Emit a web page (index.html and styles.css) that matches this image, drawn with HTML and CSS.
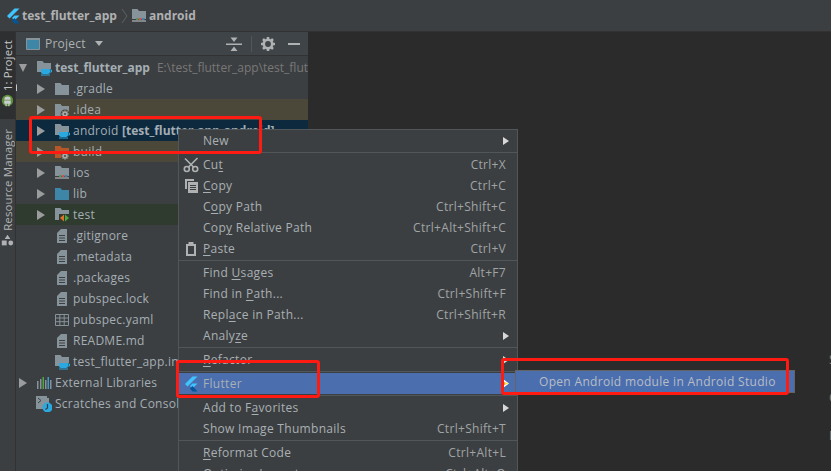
FILE: index.html
```html
<!DOCTYPE html>
<html lang="en">
<head>
<meta charset="utf-8">
<title>test_flutter_app</title>
<link rel="stylesheet" href="styles.css">
</head>
<body>
<svg class="defs" width="0" height="0">
  <symbol id="flutter" viewBox="0 0 16 16">
    <polygon fill="#40c4ff" points="9.5,0.5 14.500,0.5 4.5,10.500 2,8"/>
    <polygon fill="#40c4ff" points="9.5,7.5 14.500,7.500 9.500,12.500 7,10"/>
    <polygon fill="#03569b" points="7,12.500 9.500,10 14.500,15.500 9.500,15.500"/>
  </symbol>
  <symbol id="folder" viewBox="0 0 16 16">
    <path fill="#87939a" d="M1 2h5.500l1.500 2h7v10H1z"/>
  </symbol>
  <symbol id="folder-blue" viewBox="0 0 16 16">
    <path fill="#3d86a8" d="M1 2h5.500l1.500 2h7v10H1z"/>
  </symbol>
  <symbol id="folder-orange" viewBox="0 0 16 16">
    <path fill="#b5562b" d="M1 2h5.500l1.500 2h7v10H1z"/>
    <circle cx="11" cy="12" r="4" fill="#4b483a"/>
    <path stroke="#a9adaf" stroke-width="1.400" d="M11 8.500v7M7.500 12h7M8.500 9.500l5 5M13.500 9.500l-5 5"/>
    <circle cx="11" cy="12" r="1" fill="#4b483a"/>
  </symbol>
  <symbol id="folder-gear" viewBox="0 0 16 16">
    <path fill="#87939a" d="M1 2h5.500l1.500 2h7v10H1z"/>
    <circle cx="11" cy="12" r="4.500" fill="#4b483a"/>
    <path stroke="#a9adaf" stroke-width="1.400" d="M11 8.500v7M7.500 12h7M8.500 9.500l5 5M13.500 9.500l-5 5"/>
    <circle cx="11" cy="12" r="1" fill="#4b483a"/>
  </symbol>
  <symbol id="folder-cup" viewBox="0 0 16 16">
    <path fill="#87939a" d="M1 1h5.500l1.500 2h7v6H5v3H1z"/>
    <path fill="#29a9e0" d="M5 9h9v3a2 2 0 0 1-2 2H7a2 2 0 0 1-2-2z"/>
    <path fill="none" stroke="#29a9e0" d="M14 10h1.500v2H14"/>
    <path fill="#29a9e0" d="M5 14.500h9v1H5z"/>
  </symbol>
  <symbol id="folder-android" viewBox="0 0 16 16">
    <path fill="#87939a" d="M1 1h5.500l1.500 2h7v8H1z"/>
    <path fill="#c8ced1" d="M1 12.500h14v1H1z"/>
    <path fill="#5f8f5a" d="M5 10h2.500v2H5z"/>
    <path fill="#c75450" d="M8 10h2.500v2H8z"/>
    <path fill="#3d86a8" d="M11 10h2.500v2H11z"/>
  </symbol>
  <symbol id="folder-test" viewBox="0 0 16 16">
    <path fill="#87939a" d="M1 1h5.500l1.500 2h7v10H1z"/>
    <path fill="#2e3b2e" d="M5 7h11v9H5z"/>
    <path fill="#e0702a" d="M10 7.500v7L6 11z"/>
    <path fill="#4fa83d" d="M11 7.500v7l4-3.500z"/>
  </symbol>
  <symbol id="file" viewBox="0 0 16 16">
    <path fill="#87939a" d="M7 1h6v14H3V5z"/>
    <path stroke="#3c3f41" d="M5 7.500h6M5 10h6M5 12.500h6"/>
  </symbol>
  <symbol id="table" viewBox="0 0 16 16">
    <path fill="none" stroke="#87939a" d="M1.500 2.500h13v11h-13zM1.500 6h13M1.500 9.700h13M5.800 2.500v11M10.200 2.500v11"/>
  </symbol>
  <symbol id="libs" viewBox="0 0 16 16">
    <path fill="#87939a" d="M1 6h1.500v8H1z"/>
    <path fill="#87939a" d="M4 4h1.500v10H4z"/>
    <path fill="#4fa83d" d="M6.500 2H8v12H6.500z"/>
    <path fill="#87939a" d="M9 5h1.500v9H9z"/>
    <path fill="#3d9bd0" d="M11.500 2H13v12h-1.500z"/>
    <path fill="#87939a" d="M14 5h1.500v9H14z"/>
  </symbol>
  <symbol id="scratch" viewBox="0 0 16 16">
    <path fill="#87939a" d="M0 0h11v2h2v7H8v4H0z"/>
    <path fill="none" stroke="#3c3f41" d="M2 2l3 2.500L2 7"/>
    <circle cx="11.500" cy="11.500" r="5" fill="#29a9e0"/>
    <path fill="none" stroke="#3c3f41" stroke-width="1.200" d="M11.500 8v4l-2 1.500"/>
  </symbol>
  <symbol id="scissors" viewBox="0 0 16 16">
    <path fill="none" stroke="#afb1b3" stroke-width="1.600" d="M14.500 1L5.500 10M2 1.500l9 9"/>
    <circle cx="3.800" cy="12" r="2.500" fill="none" stroke="#afb1b3" stroke-width="1.600"/>
    <circle cx="12.200" cy="12" r="2.500" fill="none" stroke="#afb1b3" stroke-width="1.600"/>
  </symbol>
  <symbol id="copy" viewBox="0 0 16 16">
    <path fill="#afb1b3" d="M2 1h9v2H4v8H2z"/>
    <path fill="#afb1b3" d="M5 4h10v11H5z"/>
    <path stroke="#3c3f41" d="M7 7.500h6M7 9.500h6M7 11.500h6"/>
  </symbol>
  <symbol id="paste" viewBox="0 0 16 16">
    <path fill="none" stroke="#afb1b3" stroke-width="2" d="M4 4h8v10H4z"/>
    <path fill="#afb1b3" d="M5.500 1h5v3h-5z"/>
  </symbol>
  <symbol id="gear" viewBox="0 0 16 16">
    <circle cx="8" cy="8" r="4.200" fill="none" stroke="#afb1b3" stroke-width="2.600"/>
    <path stroke="#afb1b3" stroke-width="2.600" d="M8 1v2.500M8 12.500V15M1 8h2.500M12.500 8H15M3 3l1.800 1.800M11.200 11.200L13 13M13 3l-1.800 1.800M4.800 11.200L3 13"/>
  </symbol>
  <symbol id="collapse" viewBox="0 0 16 16">
    <path fill="#afb1b3" d="M0 7.500h16v1.500H0zM8 6L4.500 1.500h7zM8 10.500L4.500 15h7z"/>
  </symbol>
  <symbol id="panel" viewBox="0 0 16 16">
    <path fill="#3d86a8" stroke="#87939a" d="M1.500 2.500h13v11h-13z"/>
    <path fill="#87939a" d="M1 2h14v2H1z"/>
  </symbol>
  <symbol id="android" viewBox="0 0 16 16">
    <circle cx="8" cy="8" r="7" fill="#5f8f3a"/>
    <path fill="#c8ced1" d="M4 7a4 4 0 0 1 8 0z"/>
    <path fill="#c8ced1" d="M4 8h8v4h-1.500v3H9v-3H7v3H5.500v-3H4z"/>
  </symbol>
  <symbol id="shapes" viewBox="0 0 16 16">
    <path fill="#afb1b3" d="M8 1l3.500 5h-7z"/>
    <path fill="#afb1b3" d="M1 8h6v6H1z"/>
    <circle cx="12" cy="11" r="3" fill="#afb1b3"/>
  </symbol>
</svg>

<header class="nav">
  <svg class="nav-logo"><use href="#flutter"/></svg>
  <b class="crumb">test_flutter_app</b>
  <svg class="chev" viewBox="0 0 8 16"><path fill="none" stroke="#5e6060" d="M1 1l5 7-5 7"/></svg>
  <svg class="ico"><use href="#folder-android"/></svg>
  <b class="crumb">android</b>
</header>

<div class="main">
  <aside class="stripe">
    <div class="tab active">
      <span class="vtext"><u>1</u>: Project</span>
      <svg class="stripe-ico"><use href="#android"/></svg>
    </div>
    <div class="tab">
      <span class="vtext">Resource Manager</span>
      <svg class="stripe-ico"><use href="#shapes"/></svg>
    </div>
  </aside>

  <section class="panel">
    <div class="panel-head">
      <svg class="ico"><use href="#panel"/></svg>
      <span class="panel-title">Project</span>
      <span class="caret"></span>
      <span class="spacer"></span>
      <svg class="ico head-btn"><use href="#collapse"/></svg>
      <span class="head-sep"></span>
      <svg class="ico head-btn"><use href="#gear"/></svg>
      <span class="minus"></span>
    </div>
    <div class="tree">
      <div class="row root"><span class="arrow down"></span><svg class="ico"><use href="#folder-cup"/></svg><b>test_flutter_app</b><span class="path">E:\test_flutter_app\test_flutter_app</span></div>
      <div class="row d1"><span class="arrow"></span><svg class="ico"><use href="#folder"/></svg><span>.gradle</span></div>
      <div class="row d1 olive"><span class="arrow"></span><svg class="ico"><use href="#folder-gear"/></svg><span>.idea</span></div>
      <div class="row d1 selected"><span class="arrow"></span><svg class="ico"><use href="#folder-cup"/></svg><span>android <b>[test_flutter-app-android]</b></span></div>
      <div class="row d1 olive"><span class="arrow"></span><svg class="ico"><use href="#folder-orange"/></svg><span>build</span></div>
      <div class="row d1"><span class="arrow"></span><svg class="ico"><use href="#folder-android"/></svg><span>ios</span></div>
      <div class="row d1"><span class="arrow"></span><svg class="ico"><use href="#folder-blue"/></svg><span>lib</span></div>
      <div class="row d1 green"><span class="arrow"></span><svg class="ico"><use href="#folder-test"/></svg><span>test</span></div>
      <div class="row d1"><span class="arrow none"></span><svg class="ico"><use href="#file"/></svg><span>.gitignore</span></div>
      <div class="row d1"><span class="arrow none"></span><svg class="ico"><use href="#file"/></svg><span>.metadata</span></div>
      <div class="row d1"><span class="arrow none"></span><svg class="ico"><use href="#file"/></svg><span>.packages</span></div>
      <div class="row d1"><span class="arrow none"></span><svg class="ico"><use href="#file"/></svg><span>pubspec.lock</span></div>
      <div class="row d1"><span class="arrow none"></span><svg class="ico"><use href="#table"/></svg><span>pubspec.yaml</span></div>
      <div class="row d1"><span class="arrow none"></span><svg class="ico"><use href="#file"/></svg><span>README.md</span></div>
      <div class="row d1"><span class="arrow none"></span><svg class="ico"><use href="#folder-cup"/></svg><span>test_flutter_app.iml</span></div>
      <div class="row root"><span class="arrow"></span><svg class="ico"><use href="#libs"/></svg><span>External Libraries</span></div>
      <div class="row root"><span class="arrow none"></span><svg class="ico"><use href="#scratch"/></svg><span>Scratches and Consoles</span></div>
    </div>
  </section>

  <main class="editor">
    <div class="hints"><span>S</span><span>G</span><span>D</span></div>
  </main>
</div>

<nav class="menu">
  <div class="item"><span class="slot"></span><span class="label">New</span><span class="sub"></span></div>
  <hr>
  <div class="item"><svg class="slot"><use href="#scissors"/></svg><span class="label">Cu<u>t</u></span><span class="key">Ctrl+X</span></div>
  <div class="item"><svg class="slot"><use href="#copy"/></svg><span class="label"><u>C</u>opy</span><span class="key">Ctrl+C</span></div>
  <div class="item"><span class="slot"></span><span class="label">C<u>o</u>py Path</span><span class="key">Ctrl+Shift+C</span></div>
  <div class="item"><span class="slot"></span><span class="label">Cop<u>y</u> Relative Path</span><span class="key">Ctrl+Alt+Shift+C</span></div>
  <div class="item"><svg class="slot"><use href="#paste"/></svg><span class="label"><u>P</u>aste</span><span class="key">Ctrl+V</span></div>
  <hr>
  <div class="item"><span class="slot"></span><span class="label">Find <u>U</u>sages</span><span class="key">Alt+F7</span></div>
  <div class="item"><span class="slot"></span><span class="label">Find in <u>P</u>ath...</span><span class="key">Ctrl+Shift+F</span></div>
  <div class="item"><span class="slot"></span><span class="label">Repl<u>a</u>ce in Path...</span><span class="key">Ctrl+Shift+R</span></div>
  <div class="item"><span class="slot"></span><span class="label">Analy<u>z</u>e</span><span class="sub"></span></div>
  <hr>
  <div class="item"><span class="slot"></span><span class="label"><u>R</u>efactor</span><span class="sub"></span></div>
  <hr>
  <div class="item active"><svg class="slot"><use href="#flutter"/></svg><span class="label">Flutter</span><svg class="sub-on" viewBox="0 0 6 9"><path fill="#fff" d="M0 0l6 4.500L0 9z"/><path fill="#ffe800" d="M2 3l3 1.500L2 6z"/><path fill="#d02030" d="M0 3h1.500v3H0z"/></svg></div>
  <hr>
  <div class="item"><span class="slot"></span><span class="label">Add to F<u>a</u>vorites</span><span class="sub"></span></div>
  <div class="item"><span class="slot"></span><span class="label">Show Image Thumbnails</span><span class="key">Ctrl+Shift+T</span></div>
  <hr>
  <div class="item"><span class="slot"></span><span class="label"><u>R</u>eformat Code</span><span class="key">Ctrl+Alt+L</span></div>
  <div class="item"><span class="slot"></span><span class="label">Optimi<u>z</u>e Imports</span><span class="key">Ctrl+Alt+O</span></div>
</nav>

<div class="submenu">Open Android module in Android Studio</div>

<div class="mark mark-android"></div>
<div class="mark mark-flutter"></div>
<div class="mark mark-open"></div>
</body>
</html>
```
FILE: styles.css
```css
* { box-sizing: border-box; }
html, body { margin: 0; height: 100%; }
body {
  position: relative;
  display: flex;
  flex-direction: column;
  width: 831px;
  height: 471px;
  overflow: hidden;
  background: #2b2b2b;
  color: #afb1b3;
  font-family: "Open Sans", "Noto Sans", sans-serif;
  font-size: 12px;
}
.defs { position: absolute; }
.ico { width: 16px; height: 16px; flex: none; }

.nav {
  display: flex;
  align-items: center;
  height: 32px;
  flex: none;
  padding: 0 0 0 5px;
  background: #3c3f41;
  border-bottom: 1px solid #323232;
}
.nav-logo { width: 16px; height: 16px; margin-right: 1px; }
.crumb { font-weight: 700; color: #afb1b3; }
.chev { width: 8px; height: 16px; margin: 0 2px 0 4px; }
.nav .ico { margin-right: 2px; }

.main { display: flex; flex: 1; min-height: 0; }

.stripe {
  width: 16px;
  flex: none;
  background: #3c3f41;
  border-right: 1px solid #323232;
}
.tab {
  display: flex;
  flex-direction: column;
  align-items: center;
  padding: 6px 0 5px;
}
.tab.active {
  height: 87px;
  margin-bottom: 4px;
  padding-top: 8px;
  background: #2d2f30;
  color: #c4c6c8;
}
.vtext {
  writing-mode: vertical-rl;
  transform: rotate(180deg);
  font-size: 11.5px;
  line-height: 15px;
  letter-spacing: 0.1px;
  white-space: nowrap;
}
.stripe-ico { width: 13px; height: 13px; margin-top: 3px; flex: none; }

.panel {
  width: 292px;
  flex: none;
  background: #3c3f41;
  overflow: hidden;
}
.panel-head {
  display: flex;
  align-items: center;
  height: 24px;
  padding: 0 8px 0 9px;
  background: #3e4447;
  border-bottom: 1px solid #323232;
}
.panel-title { margin-left: 4px; letter-spacing: 0.25px; }
.caret {
  width: 0;
  height: 0;
  margin-left: 9px;
  border: 4px solid transparent;
  border-top: 5px solid #afb1b3;
  border-bottom: 0;
}
.spacer { flex: 1; }
.head-sep { width: 1px; height: 16px; margin: 0 8px 0 9px; background: #515658; }
.minus { width: 12px; height: 2px; margin-left: 12px; background: #afb1b3; }

.tree { padding-top: 1px; }
.row {
  display: flex;
  align-items: center;
  height: 21px;
  white-space: nowrap;
  color: #a4aeb5;
  letter-spacing: 0.25px;
  overflow: hidden;
}
.row.root { padding-left: 3px; }
.row.d1 { padding-left: 21px; }
.row b { font-weight: 700; letter-spacing: 0; }
.row > span:last-child, .row > b { margin-left: 3px; }
.row > span.path:last-child { margin-left: 7px; color: #787878; letter-spacing: 0; }
.arrow {
  width: 0;
  height: 0;
  flex: none;
  margin-right: 9px;
  border: 5px solid transparent;
  border-left: 8px solid #9a9c9e;
  border-right: 0;
}
.arrow.down {
  border: 4px solid transparent;
  border-top: 8px solid #9a9c9e;
  border-bottom: 0;
}
.arrow.none { border-color: transparent; }
.olive { background: #4b483a; }
.selected { background: #0d293e; }
.green { background: #2e3b2e; }

.editor { position: relative; flex: 1; background: #2b2b2b; }
.hints {
  position: absolute;
  left: 521px;
  top: 319px;
  display: flex;
  flex-direction: column;
  gap: 21px;
  color: #8a8073;
}

.menu {
  position: absolute;
  left: 178px;
  top: 129px;
  width: 340px;
  height: 360px;
  padding-top: 0;
  background: #3c3f41;
  border: 1px solid #515658;
  color: #a9b0b4;
  letter-spacing: 0.3px;
}
.menu hr {
  height: 2px;
  margin: 1px 0 0;
  border: 0;
  border-top: 1px solid #515658;
}
.item {
  display: flex;
  align-items: center;
  height: 21px;
  padding-right: 11px;
  white-space: nowrap;
}
.item.active { background: #4b6eaf; }
.slot { width: 16px; height: 16px; margin: 0 4px 0 4px; flex: none; }
.label { flex: 1; }
.key { color: #a0a4a6; }
.sub {
  width: 0;
  height: 0;
  margin-right: -3px;
  border: 4px solid transparent;
  border-left: 6px solid #d8d8d8;
  border-right: 0;
}
.sub-on { width: 6px; height: 9px; margin-right: -3px; flex: none; }
u { text-underline-offset: 2px; }

.submenu {
  position: absolute;
  left: 515px;
  top: 370px;
  width: 280px;
  height: 23px;
  padding-left: 23px;
  line-height: 21px;
  letter-spacing: 0.32px;
  background: #4b6eaf;
  border: 1px solid #646464;
  color: #b8bdc4;
  white-space: nowrap;
}

.mark {
  position: absolute;
  border: 3px solid #ff1a12;
  border-radius: 3px;
}
.mark-android { left: 29px; top: 116px; width: 233px; height: 38px; }
.mark-flutter { left: 176px; top: 360px; width: 144px; height: 38px; }
.mark-open { left: 501px; top: 358px; width: 288px; height: 37px; }
```
